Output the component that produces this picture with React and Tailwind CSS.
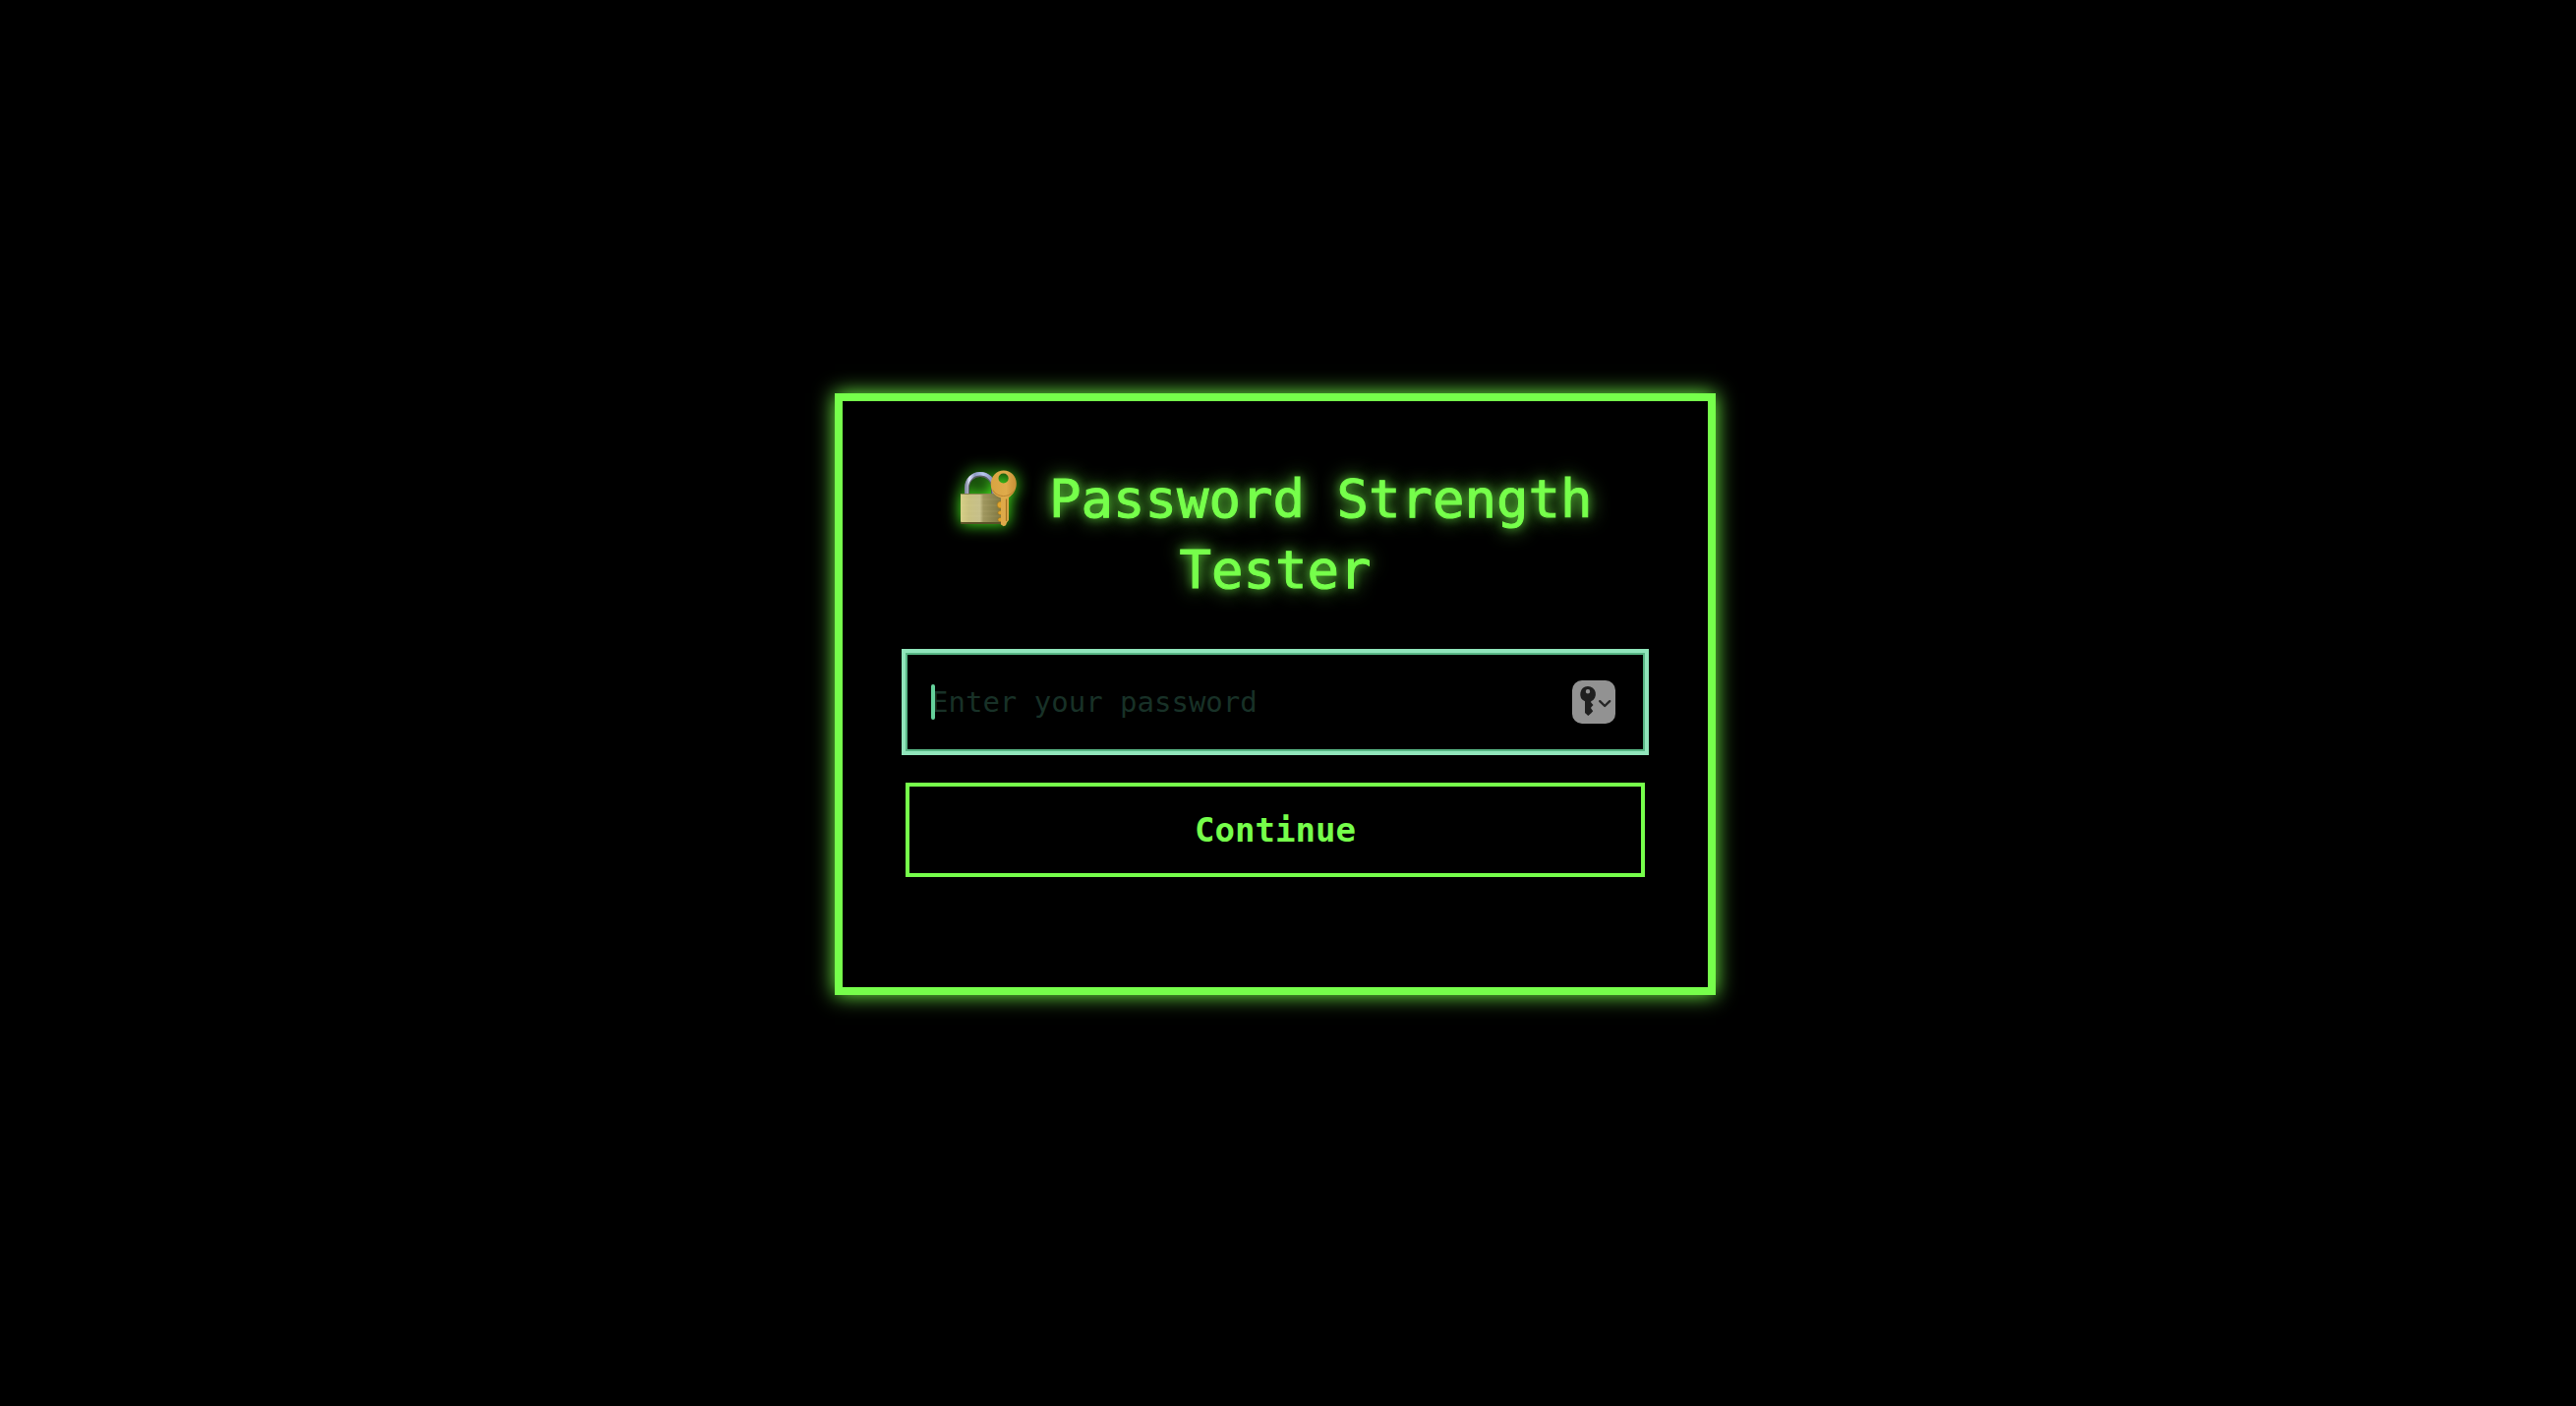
function LockWithKey() {
  return (
    <svg
      viewBox="-2 -2 60 60"
      role="img"
      aria-label="Locked with key"
      className="inline-block size-[60px] align-[-10px] overflow-visible drop-shadow-[0_0_8px_#4dff22]"
    >
      <defs>
        <linearGradient id="body" x1="0" x2="1" y1="0" y2="0">
          <stop offset="0" stopColor="#d6cf86" />
          <stop offset="0.2" stopColor="#c9c180" />
          <stop offset="0.47" stopColor="#c6bf8b" />
          <stop offset="0.55" stopColor="#9f975f" />
          <stop offset="1" stopColor="#7c743f" />
        </linearGradient>
        <linearGradient id="shackle" x1="0" x2="1" y1="0" y2="0">
          <stop offset="0" stopColor="#8d93ac" />
          <stop offset="0.1" stopColor="#dfe6fb" />
          <stop offset="0.3" stopColor="#8f9cc4" />
          <stop offset="0.6" stopColor="#b9c8f2" />
          <stop offset="1" stopColor="#7f88ae" />
        </linearGradient>
        <linearGradient id="key" x1="0" x2="1" y1="0" y2="0">
          <stop offset="0" stopColor="#d9a441" />
          <stop offset="0.6" stopColor="#dfab4b" />
          <stop offset="1" stopColor="#c68f35" />
        </linearGradient>
      </defs>
      <path d="M7.5 25V18.500C7.500 9.500 14 4.500 21 4.500S34.500 9.500 34.500 18.500V25" fill="none" stroke="#5c5f66" strokeWidth="5" />
      <path d="M7 25V18.500C7 9 14 3.800 21 3.800S35 9 35 18.500V25" fill="none" stroke="url(#shackle)" strokeWidth="3.600" />
      <rect x="1" y="24" width="42" height="31" rx="1" fill="#5b5128" />
      <rect x="1" y="24" width="42" height="29" rx="1" fill="url(#body)" />
      <path d="M1.500 24.500h41" stroke="#8b8450" strokeWidth="1" />
      <path d="M2 30h40M2 36h40M2 42h40M2 47h40" stroke="#fff6b8" strokeOpacity="0.070" strokeWidth="1.500" />
      <path d="M42 32c-5 0-5 7 0 7M42 41.500c-4 0-4 4 0 4M42 48.500c-4 0-4 4 0 4" fill="#e0a52e" stroke="#a87a1b" strokeWidth="0.700" />
      <path
        fillRule="evenodd"
        d="M44.800 0.500C52 0.500 57.800 6 57.800 13.800C57.800 20.500 54 25.500 50 28V51L48 53.500L47 56.200L44.800 57.200L42 55.500V28.500C35.500 26.500 31.800 21.500 31.800 14.500C31.800 6.500 37.500 0.500 44.800 0.500ZM44.600 3.600A5.100 4.900 0 1 0 44.600 13.400A5.100 4.900 0 1 0 44.600 3.600Z"
        fill="url(#key)"
      />
      <path d="M47.500 29.500V52" stroke="#a46f22" strokeWidth="1.200" />
      <path d="M34 20.500C38 28.500 51 28.500 55.800 20.500" fill="none" stroke="#b67f2c" strokeWidth="0.900" />
    </svg>
  );
}

function KeyMenuIcon() {
  return (
    <svg viewBox="0 0 44 44" className="size-[44px]" aria-hidden="true">
      <path
        fillRule="evenodd"
        d="M16 6a8 8 0 0 1 3.200 15.300V22.500L21.500 25L19.200 27.500V28.500L21.200 31.200L19.200 33.500L16.300 36L13 33V21.300A8 8 0 0 1 16 6ZM16 9a2.200 2.200 0 1 0 0 4.400A2.200 2.200 0 0 0 16 9Z"
        fill="#1f1f1f"
      />
      <path d="M28.200 21.200L33.200 26L38.200 21.200" fill="none" stroke="#262626" strokeWidth="2.400" strokeLinecap="round" strokeLinejoin="round" />
    </svg>
  );
}

export default function App() {
  return (
    <main className="flex min-h-screen items-center justify-center bg-black pr-[26px] pb-[18px] font-['DejaVu_Sans_Mono',monospace] text-[#76ff4b]">
      <form
        className="w-full max-w-4xl border-8 border-[#76ff4b] bg-black px-16 pt-16 pb-28 shadow-[0_0_20px_#76ff4b]"
        onSubmit={(event) => event.preventDefault()}
      >
        <h1 className="mb-12 text-center text-[54px] leading-[72px] font-normal [-webkit-text-stroke:1px_#76ff4b] [text-shadow:0_0_10px_#76ff4b99,0_0_20px_#76ff4b]">
          <LockWithKey /> Password Strength Tester
        </h1>
        <div className="relative mb-8">
          <input
            id="password"
            type="password"
            aria-label="Password"
            placeholder="Enter your password"
            className="block h-[100px] w-full border-2 border-[#57b584] bg-black pr-24 pl-6 text-[29px] text-[#65d19b] outline-4 outline-[#90e5bb] placeholder:text-[#183127]"
          />
          <span className="absolute top-8 left-[26px] h-9 w-1 rounded-full bg-[#65d19b]" />
          <button
            type="button"
            aria-label="Saved passwords"
            className="absolute top-7 right-[30px] size-[44px] rounded-[10px] bg-[#929292]"
          >
            <KeyMenuIcon />
          </button>
        </div>
        <button type="submit" className="block h-24 w-full border-4 border-[#76ff4b] bg-black text-[34px] font-bold">
          Continue
        </button>
      </form>
    </main>
  );
}
